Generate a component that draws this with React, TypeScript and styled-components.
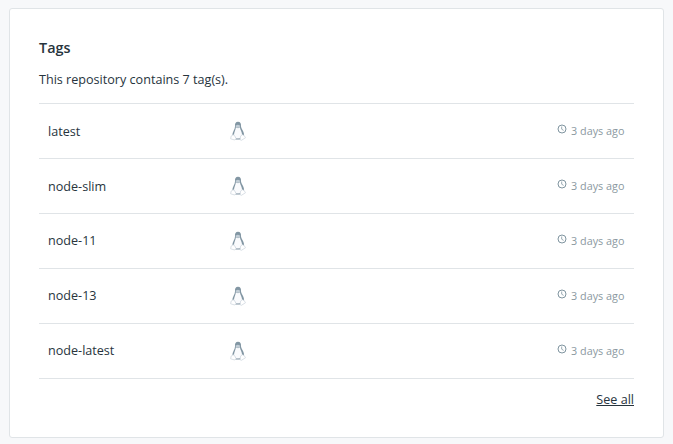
import React from 'react';
import styled, { createGlobalStyle } from 'styled-components';

const GlobalStyle = createGlobalStyle`
  * { box-sizing: border-box; }
  body { margin: 0; background: #f7f8fa; color: #27343d; font-family: "Open Sans", sans-serif; font-size: 12.6px; overflow: hidden; }
`;
const Page = styled.main`padding: 8px 9px 6px; height: 444px;`;
const Card = styled.section`
  height: 430px; padding: 29px; background: #fff;
  border: 1px solid #e0e4e7; border-radius: 3px;
`;
const Title = styled.h2`margin: 0; font-size: 14.4px; line-height: 20px; font-weight: 600;`;
const Summary = styled.p`margin: 12px 0 13.4px; line-height: 20px; height: 20px;`;
const List = styled.ul`margin: 0; padding: 0; list-style: none; border-top: 1px solid #e0e4e7;`;
const Row = styled.li`
  display: grid; grid-template-columns: 182px 1fr auto; align-items: center;
  height: 54.9px; padding: 0 9.6px 0 9px; border-bottom: 1px solid #e0e4e7;
`;
const Name = styled.span`line-height: 20px; margin-top: 0.6px;`;
const Platform = styled.span`display: flex;`;
const Age = styled.span`
  display: flex; align-items: center; gap: 4px; margin-top: -0.8px;
  font-size: 10.8px; line-height: 16px; color: #8b999f;
  svg { display: block; margin-top: -3.2px; }
`;
const Footer = styled.footer`display: flex; justify-content: flex-end; padding-top: 11.4px; line-height: 20px;`;
const SeeAll = styled.a`color: inherit; text-decoration: underline;`;

const Penguin = () => (
  <svg width="16" height="20" viewBox="0 0 16 20">
    <path d="M5 5.500C4.800 2.300 5.700.8 8 .8c2.400 0 3.200 1.700 3 4.500.2 2.700 3.100 5 3.100 8.800 0 2-1.600 4.400-3.600 4.400H5.700c-2 0-3.400-2-3.400-4.200 0-3.400 2.700-5.600 2.700-8.800Z" fill="#8296a3" />
    <path d="M5.900 6.300 8 7.200l1.800-.9c.5 2.800 2.300 4.700 2.300 8 0 2.300-1.500 3.200-4.100 3.200-2.700 0-4-1-4-3.400 0-3 1.600-4.800 1.900-7.800Z" fill="#fafbfd" />
    <path d="m5.600 4.400 2.300-.7 2.100.7L9.800 6 8 6.900 5.900 6Z" fill="#c3ced6" />
    <path d="M3.100 13.700 1.200 15 .6 17.800l4.200 1.200 1.300-1.400-1.600-3.100ZM12.500 13.700l-1.800 1.200-.7 3.700 1.400.7 4.100-2.500-1.400-2.300Z" fill="#fff" stroke="#d0d8df" strokeWidth=".8" strokeLinejoin="round" />
  </svg>
);
const Clock = () => (
  <svg width="10" height="10" viewBox="0 0 10 10" fill="none" stroke="#8095a0">
    <circle cx="5" cy="5" r="4" /><path d="M4.700 2.500v2.700l1.900 1.200" strokeWidth=".8" />
  </svg>
);
const tags = ['latest', 'node-slim', 'node-11', 'node-13', 'node-latest'];

export default function App() {
  return (
    <><GlobalStyle /><Page><Card>
      <Title>Tags</Title>
      <Summary>This repository contains 7 tag(s).</Summary>
      <List>{tags.map(tag => (
        <Row key={tag}><Name>{tag}</Name><Platform><Penguin /></Platform><Age><Clock />3 days ago</Age></Row>
      ))}</List>
      <Footer><SeeAll>See all</SeeAll></Footer>
    </Card></Page></>
  );
}
